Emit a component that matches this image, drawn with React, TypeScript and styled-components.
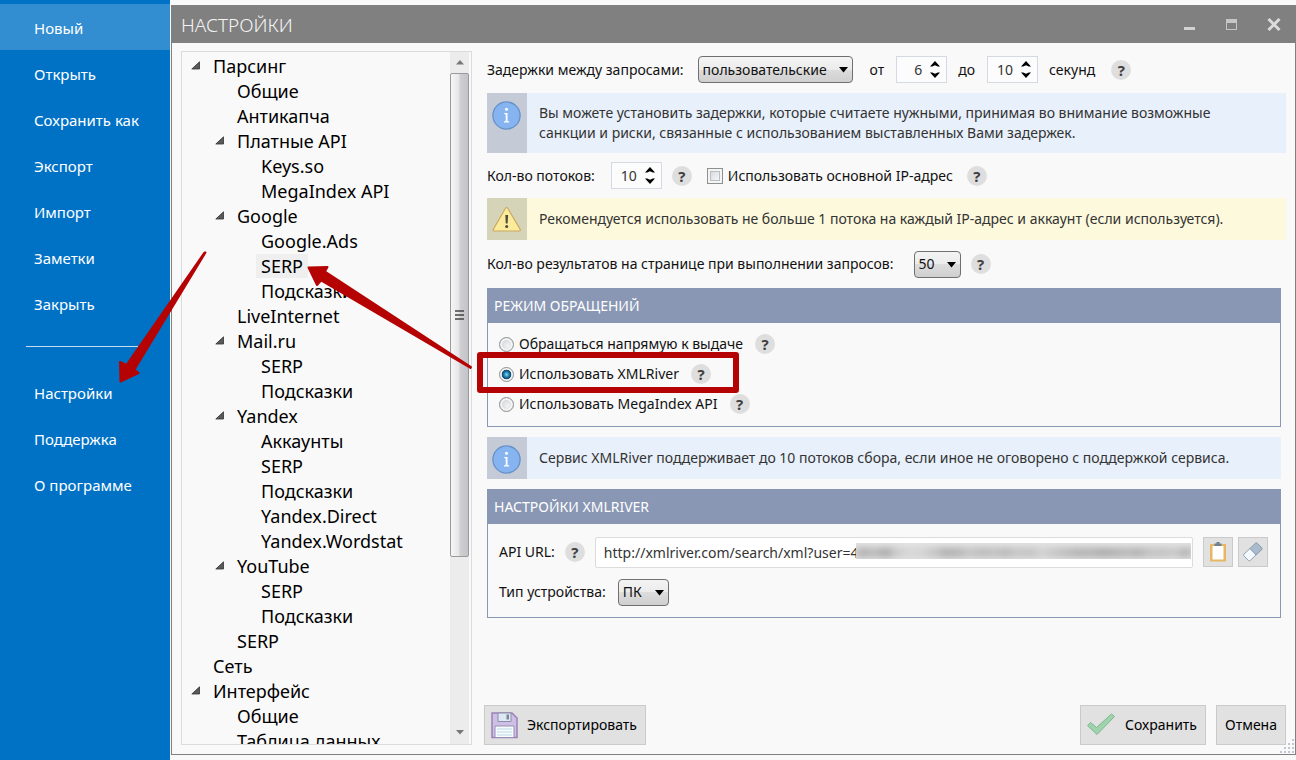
import React, { useState } from "react";
import styled, { createGlobalStyle, css } from "styled-components";

const GlobalStyle = createGlobalStyle`
  *, *::before, *::after { box-sizing: border-box; }
  body {
    margin: 0;
    background: #f9f9f9;
    color: #111;
    font-family: "Noto Sans", "Open Sans", sans-serif;
    font-size: 14px;
    line-height: 20px;
  }
  button, input, select { font: inherit; color: inherit; margin: 0; }
`;

const Page = styled.div`
  position: relative;
  display: flex;
  height: 100vh;
  overflow: hidden;
`;

/* ---------- Left menu ---------- */

const Sidebar = styled.nav`
  flex: 0 0 170px;
  padding-top: 4px;
  background: #0072c6;
`;

const MenuItem = styled.button<{ $active?: boolean }>`
  display: block;
  width: 100%;
  height: 46px;
  padding: 1px 0 0 34px;
  border: 0;
  background: ${(p) => (p.$active ? "#338ed1" : "transparent")};
  color: #fff;
  font-size: 15px;
  text-align: left;
  cursor: pointer;
`;

const MenuRule = styled.hr`
  width: 112px;
  height: 1px;
  margin: 20px 0 22px 26px;
  border: 0;
  background: #c3def2;
`;

/* ---------- Window ---------- */

const Window = styled.main`
  display: flex;
  flex: 1;
  flex-direction: column;
  min-width: 0;
  margin: 5px 0 5px 1px;
  border: 1px solid #808080;
`;

const TitleBar = styled.header`
  display: flex;
  flex: 0 0 37px;
  align-items: center;
  justify-content: space-between;
  padding: 0 11px 0 9px;
  background: #808080;
`;

const Title = styled.h1`
  margin: 0;
  color: #f4f4f4;
  font-size: 19px;
  font-weight: 300;
  line-height: 24px;
`;

const WindowButtons = styled.div`
  display: flex;
  gap: 22px;
`;

const WindowButton = styled.button`
  display: grid;
  width: 20px;
  height: 20px;
  padding: 0;
  place-items: center;
  border: 0;
  background: none;
`;

const WindowBody = styled.div`
  display: flex;
  flex: 1;
  gap: 12px;
  min-height: 0;
  padding: 8px 9px 9px;
`;

/* ---------- Tree ---------- */

const TreePanel = styled.aside`
  display: flex;
  flex: 0 0 291px;
  padding-right: 2px;
  border: 1px solid #dcdcdc;
`;

const Tree = styled.ul`
  flex: 1;
  margin: 0;
  padding: 1px 0 0;
  overflow: hidden;
  list-style: none;
`;

const TreeRow = styled.li<{ $level: number }>`
  display: flex;
  align-items: center;
  height: 25px;
  padding-left: ${(p) => 9 + p.$level * 24}px;
  font-size: 18px;
  line-height: 24px;
`;

const Twisty = styled.svg`
  flex: none;
  width: 9px;
  height: 9px;
  margin-right: 8px;
`;

const TreeLabel = styled.span<{ $selected: boolean }>`
  padding: 0 5px;
  background: ${(p) => (p.$selected ? "#efefef" : "transparent")};
  color: #000;
  white-space: nowrap;
`;

const ScrollTrack = styled.div`
  display: flex;
  flex: 0 0 19px;
  flex-direction: column;
  align-items: center;
  background: #ececec;
`;

const ScrollArrow = styled.svg`
  flex: none;
  width: 18px;
  height: 21px;
`;

const ScrollThumb = styled.div`
  display: grid;
  flex: 0 1 484px;
  width: 19px;
  place-items: center;
  border: 1px solid #9a9a9a;
  border-radius: 2px;
  background: linear-gradient(90deg, #f6f6f6, #e6e6e8 45%, #cfcfd2 55%, #c3c4c9);
`;

const ScrollSpace = styled.div`
  flex: 1;
`;

/* ---------- Settings form ---------- */

const Content = styled.section`
  display: flex;
  flex: 1;
  flex-direction: column;
  min-width: 0;
  padding-left: 3px;
`;

const FormRow = styled.div<{ $height: number }>`
  display: flex;
  align-items: center;
  height: ${(p) => p.$height}px;
  white-space: nowrap;
`;

const FormGap = styled.div<{ $size: number }>`
  flex: 0 0 ${(p) => p.$size}px;
  height: ${(p) => p.$size}px;
`;

const Caption = styled.label<{ $gap: number; $before?: number }>`
  margin: 0 ${(p) => p.$gap}px 0 ${(p) => p.$before ?? 0}px;
`;

const SelectBox = styled.span<{ $width: number }>`
  position: relative;
  flex: none;
  width: ${(p) => p.$width}px;
  height: 27px;

  select {
    width: 100%;
    height: 100%;
    padding: 0 0 0 4px;
    appearance: none;
    border: 1px solid #707070;
    border-radius: 4px;
    background: linear-gradient(#f4f4f4, #ebebeb 50%, #dddddd 50%, #cfcfcf);
  }

  svg {
    position: absolute;
    top: 11px;
    right: 5px;
    pointer-events: none;
  }
`;

const SpinnerBox = styled.span`
  display: flex;
  flex: none;
  width: 51px;
  height: 27px;
  border: 1px solid #d5d9e4;
  background: #fcfcfc;

  input {
    width: 25px;
    padding: 0;
    border: 0;
    background: none;
    color: #333;
    text-align: right;
  }
`;

const SpinnerButtons = styled.span`
  display: flex;
  flex: 1;
  flex-direction: column;
  padding: 2px 0 2px 2px;

  button {
    display: grid;
    flex: 1;
    padding: 0;
    place-items: center;
    border: 0;
    background: none;
  }
`;

const HelpButton = styled.button<{ $before: number; $after?: number }>`
  flex: none;
  width: 20px;
  height: 20px;
  margin: 0 ${(p) => p.$after ?? 0}px 0 ${(p) => p.$before}px;
  padding: 0;
  border: 0;
  border-radius: 50%;
  background: #dedede;
  color: #404040;
  font-weight: 700;
  font-size: 15px;
  line-height: 20px;
`;

const CheckLabel = styled.label`
  display: flex;
  align-items: center;
  gap: 5px;
`;

const CheckBox = styled.input`
  width: 16px;
  height: 16px;
  appearance: none;
  border: 1px solid #8e8f8f;
  background: linear-gradient(135deg, #cdd1d7, #f4f4f5 75%);
  box-shadow: inset 0 0 0 2px #f4f4f4, inset 0 0 0 3px #b9bdc4;
`;

const boxTones = {
  info: css`
    --strip: #c4cbd6;
    background: #e8f0fb;
  `,
  warning: css`
    --strip: #d6d4b8;
    background: #fdf9dc;
  `,
};

const Notice = styled.div<{ $tone: "info" | "warning"; $inset?: boolean }>`
  ${(p) => boxTones[p.$tone]}
  display: flex;
  flex: none;
  margin-right: ${(p) => (p.$inset ? 5 : 0)}px;
  color: #333;

  p {
    align-self: center;
    margin: 0;
    padding: 10px 12px;
  }
`;

const NoticeStrip = styled.div`
  flex: 0 0 40px;
  padding: 7px 5px 5px;
  background: var(--strip);

  svg {
    display: block;
  }
`;

const Group = styled.fieldset`
  flex: none;
  min-width: 0;
  margin: 0 5px 0 0;
  padding: 0;
  border: 1px solid #8997b4;
`;

const GroupTitle = styled.h2`
  margin: 0;
  padding: 7px 6px;
  background: #8997b4;
  color: #fff;
  font-size: 14px;
  font-weight: 400;
  line-height: 20px;
`;

const RadioList = styled.div`
  padding: 6px 11px 7px;
`;

const RadioLabel = styled.label`
  display: flex;
  align-items: center;
  gap: 5px;
`;

const Radio = styled.input`
  width: 15px;
  height: 15px;
  appearance: none;
  border: 1px solid #8e8f8f;
  border-radius: 50%;
  background: radial-gradient(circle at 60% 60%, #f4f4f4, #cfd3d9 70%);
  box-shadow: inset 0 0 0 2px #f4f4f4;

  &:checked {
    background: radial-gradient(circle, #8fdcf5 0, #2a93c4 22%, #0f4468 48%, #f4f4f4 56%);
    box-shadow: none;
  }
`;

const ApiRows = styled.div`
  padding: 11px 12px 8px 11px;
`;

const UrlField = styled.span`
  position: relative;
  flex: 1;
  height: 31px;
  margin: 0 10px;

  input {
    width: 100%;
    height: 100%;
    padding: 0 8px;
    border: 1px solid #dcdcdc;
    border-radius: 2px;
    background: #fff;
    color: #333;
  }

  svg {
    position: absolute;
    top: 6px;
    right: 2px;
  }
`;

const ToolButton = styled.button`
  display: grid;
  flex: none;
  width: 30px;
  height: 30px;
  padding: 0;
  place-items: center;
  border: 1px solid #cacaca;
  background: #e1e1e1;

  & + & {
    margin-left: 5px;
  }
`;

/* ---------- Footer ---------- */

const Footer = styled.footer`
  display: flex;
  gap: 10px;
  margin: auto 0 0 -3px;
`;

const FooterButton = styled.button<{ $push?: boolean }>`
  display: flex;
  align-items: center;
  height: 40px;
  padding: 0 8px 0 5px;
  gap: 9px;
  margin-right: ${(p) => (p.$push ? "auto" : "0")};
  border: 1px solid #cacaca;
  background: #e1e1e1;
  color: #000;
`;

const PlainFooterButton = styled(FooterButton)`
  padding: 0 8px;
`;

const Grip = styled.svg`
  position: absolute;
  right: 2px;
  bottom: 7px;
`;

const Marks = styled.svg`
  position: absolute;
  top: 0;
  left: 0;
  pointer-events: none;
`;

/* ---------- Small pieces ---------- */

function Help({ before, after }: { before: number; after?: number }) {
  return (
    <HelpButton type="button" aria-label="Справка" $before={before} $after={after}>
      ?
    </HelpButton>
  );
}

function Select({ id, width, value }: { id: string; width: number; value: string }) {
  return (
    <SelectBox $width={width}>
      <select id={id} defaultValue={value}>
        <option>{value}</option>
      </select>
      <svg width="9" height="6" viewBox="0 0 9 6">
        <path d="M0 0h9L4.5 5.5z" fill="#000" />
      </svg>
    </SelectBox>
  );
}

function Spinner({ id, initial }: { id: string; initial: number }) {
  const [value, setValue] = useState(initial);
  return (
    <SpinnerBox>
      <input id={id} inputMode="numeric" value={value} onChange={(e) => setValue(Number(e.target.value) || 0)} />
      <SpinnerButtons>
        <button type="button" aria-label="Больше" onClick={() => setValue(value + 1)}>
          <svg width="10" height="6" viewBox="0 0 10 6">
            <path d="M0 5.500L5 0l5 5.500H7.800L5 4.300 2.200 5.500z" fill="#000" />
          </svg>
        </button>
        <button type="button" aria-label="Меньше" onClick={() => setValue(Math.max(0, value - 1))}>
          <svg width="10" height="6" viewBox="0 0 10 6">
            <path d="M0 .5L5 6l5-5.500H7.800L5 1.700 2.200.5z" fill="#000" />
          </svg>
        </button>
      </SpinnerButtons>
    </SpinnerBox>
  );
}

function InfoIcon() {
  return (
    <svg width="30" height="30" viewBox="0 0 30 30">
      <circle cx="14.500" cy="15.500" r="13.600" fill="#86b4f0" stroke="#6690c8" strokeWidth="1.300" />
      <circle cx="14.500" cy="9.300" r="1.500" fill="#fff" />
      <path d="M12.300 13h3.200v8.200h1.700v1.300h-5.200v-1.300h1.700v-6.900h-1.400z" fill="#fff" />
    </svg>
  );
}

function WarningIcon() {
  return (
    <svg width="30" height="30" viewBox="0 0 30 30">
      <path
        d="M14.500 2.500Q15.300 2.500 16 3.700L28 24Q29 26 27 26H2.500Q.5 26 1.500 24L13.200 3.700Q13.800 2.500 14.500 2.500z"
        fill="#fdeb9c"
        stroke="#c9a860"
        strokeWidth="1.200"
      />
      <path d="M13.300 10h2.800l-.5 8.500h-1.800z" fill="#4c4a3c" />
      <circle cx="14.700" cy="21.500" r="1.500" fill="#4c4a3c" />
    </svg>
  );
}

/* ---------- Data ---------- */

type Node = { level: number; text: string; open?: boolean; selected?: boolean };

const tree: Node[] = [
  { level: 0, text: "Парсинг", open: true },
  { level: 1, text: "Общие" },
  { level: 1, text: "Антикапча" },
  { level: 1, text: "Платные API", open: true },
  { level: 2, text: "Keys.so" },
  { level: 2, text: "MegaIndex API" },
  { level: 1, text: "Google", open: true },
  { level: 2, text: "Google.Ads" },
  { level: 2, text: "SERP", selected: true },
  { level: 2, text: "Подсказки" },
  { level: 1, text: "LiveInternet" },
  { level: 1, text: "Mail.ru", open: true },
  { level: 2, text: "SERP" },
  { level: 2, text: "Подсказки" },
  { level: 1, text: "Yandex", open: true },
  { level: 2, text: "Аккаунты" },
  { level: 2, text: "SERP" },
  { level: 2, text: "Подсказки" },
  { level: 2, text: "Yandex.Direct" },
  { level: 2, text: "Yandex.Wordstat" },
  { level: 1, text: "YouTube", open: true },
  { level: 2, text: "SERP" },
  { level: 2, text: "Подсказки" },
  { level: 1, text: "SERP" },
  { level: 0, text: "Сеть" },
  { level: 0, text: "Интерфейс", open: true },
  { level: 1, text: "Общие" },
  { level: 1, text: "Таблица данных" },
];

const menuTop = ["Новый", "Открыть", "Сохранить как", "Экспорт", "Импорт", "Заметки", "Закрыть"];
const menuBottom = ["Настройки", "Поддержка", "О программе"];

const modes = ["Обращаться напрямую к выдаче", "Использовать XMLRiver", "Использовать MegaIndex API"];

/* Shades of the masked account key, one block for every few characters. */
const maskShades = [
  "#b4b4b4", "#bdbdbd", "#adadad", "#cecece", "#d8d8d8", "#d4d4d4", "#c6c6c6", "#b4b4b4", "#b8b8b8", "#c6c6c6",
  "#bebebe", "#c2c2c2", "#bcbcbc", "#c8c8c8", "#c4c4c4", "#d2d2d2", "#c8c8c8", "#c0c0c0", "#b6b6b6", "#b8b8b8",
  "#b0b0b0", "#b4b4b4", "#bcbcbc", "#b6b6b6", "#c4c4c4", "#c4c4c4", "#cacaca", "#b6b6b6",
];

export default function App() {
  const [mode, setMode] = useState(modes[1]);

  return (
    <Page>
      <GlobalStyle />
      <Sidebar>
        {menuTop.map((text, i) => (
          <MenuItem key={text} type="button" $active={i === 0}>
            {text}
          </MenuItem>
        ))}
        <MenuRule />
        {menuBottom.map((text) => (
          <MenuItem key={text} type="button">
            {text}
          </MenuItem>
        ))}
      </Sidebar>

      <Window>
        <TitleBar>
          <Title>НАСТРОЙКИ</Title>
          <WindowButtons>
            <WindowButton type="button" aria-label="Свернуть">
              <svg width="12" height="12" viewBox="0 0 12 12">
                <path d="M0 8h11v3H0z" fill="#d2d2d2" />
              </svg>
            </WindowButton>
            <WindowButton type="button" aria-label="Развернуть">
              <svg width="12" height="12" viewBox="0 0 12 12">
                <path d="M0 0h11v11H0zM1 4v6h9V4z" fill="#c6c6c6" fillRule="evenodd" />
              </svg>
            </WindowButton>
            <WindowButton type="button" aria-label="Закрыть">
              <svg width="14" height="14" viewBox="0 0 14 14">
                <path d="M1.500 1l11 11M12.500 1l-11 11" stroke="#dcdcdc" strokeWidth="3" />
              </svg>
            </WindowButton>
          </WindowButtons>
        </TitleBar>

        <WindowBody>
          <TreePanel>
            <Tree>
              {tree.map((node, i) => (
                <TreeRow key={i} $level={node.level}>
                  <Twisty viewBox="0 0 9 9">
                    {node.open && <path d="M8.500 .8v7.200H.8z" fill="#5a5a5a" stroke="#333" strokeWidth=".8" />}
                  </Twisty>
                  <TreeLabel $selected={!!node.selected}>{node.text}</TreeLabel>
                </TreeRow>
              ))}
            </Tree>
            <ScrollTrack>
              <ScrollArrow viewBox="0 0 18 21">
                <path d="M5 12.500L9 8l4 4.500z" fill="#777" />
              </ScrollArrow>
              <ScrollThumb>
                <svg width="10" height="10" viewBox="0 0 10 10">
                  <path d="M0 1h9M0 5h9M0 9h9" stroke="#444" strokeWidth="1.500" />
                </svg>
              </ScrollThumb>
              <ScrollSpace />
              <ScrollArrow viewBox="0 0 18 21">
                <path d="M5 7h8l-4 4.500z" fill="#777" />
              </ScrollArrow>
            </ScrollTrack>
          </TreePanel>

          <Content>
            <FormRow $height={37}>
              <Caption htmlFor="delay" $gap={14}>Задержки между запросами:</Caption>
              <Select id="delay" width={155} value="пользовательские" />
              <Caption htmlFor="from" $gap={12} $before={17}>от</Caption>
              <Spinner id="from" initial={6} />
              <Caption htmlFor="to" $gap={12} $before={11}>до</Caption>
              <Spinner id="to" initial={10} />
              <Caption as="span" $gap={0} $before={11}>секунд</Caption>
              <Help before={16} />
            </FormRow>

            <FormGap $size={5} />
            <Notice $tone="info">
              <NoticeStrip>
                <InfoIcon />
              </NoticeStrip>
              <p>
                Вы можете установить задержки, которые считаете нужными, принимая во внимание возможные
                <br />
                санкции и риски, связанные с использованием выставленных Вами задержек.
              </p>
            </Notice>

            <FormRow $height={45}>
              <Caption htmlFor="threads" $gap={16}>Кол-во потоков:</Caption>
              <Spinner id="threads" initial={10} />
              <Help before={10} after={15} />
              <CheckLabel>
                <CheckBox type="checkbox" />
                Использовать основной IP-адрес
              </CheckLabel>
              <Help before={14} />
            </FormRow>

            <Notice $tone="warning">
              <NoticeStrip>
                <WarningIcon />
              </NoticeStrip>
              <p>Рекомендуется использовать не больше 1 потока на каждый IP-адрес и аккаунт (если используется).</p>
            </Notice>

            <FormRow $height={48}>
              <Caption htmlFor="results" $gap={20}>
                Кол-во результатов на странице при выполнении запросов:
              </Caption>
              <Select id="results" width={47} value="50" />
              <Help before={10} />
            </FormRow>

            <Group>
              <GroupTitle>РЕЖИМ ОБРАЩЕНИЙ</GroupTitle>
              <RadioList>
                {modes.map((text) => (
                  <FormRow key={text} $height={30}>
                    <RadioLabel>
                      <Radio type="radio" name="mode" checked={mode === text} onChange={() => setMode(text)} />
                      {text}
                    </RadioLabel>
                    <Help before={12} />
                  </FormRow>
                ))}
              </RadioList>
            </Group>

            <FormGap $size={10} />
            <Notice $tone="info" $inset>
              <NoticeStrip>
                <InfoIcon />
              </NoticeStrip>
              <p>Сервис XMLRiver поддерживает до 10 потоков сбора, если иное не оговорено с поддержкой сервиса.</p>
            </Notice>
            <FormGap $size={10} />

            <Group>
              <GroupTitle>НАСТРОЙКИ XMLRIVER</GroupTitle>
              <ApiRows>
                <FormRow $height={34}>
                  <Caption htmlFor="api" $gap={0}>API URL:</Caption>
                  <Help before={10} />
                  <UrlField>
                    <input id="api" type="text" defaultValue="http://xmlriver.com/search/xml?user=4" />
                    <svg width="335" height="16" viewBox="0 0 335 16">
                      <defs>
                        <filter id="mask-blur" x="0" y="0" width="1" height="1">
                          <feGaussianBlur stdDeviation="4 3" />
                        </filter>
                      </defs>
                      <rect width="335" height="16" fill="#e2e2e2" />
                      <g filter="url(#mask-blur)">
                        <rect width="335" height="16" fill="#e4e4e4" />
                        {maskShades.map((shade, i) => (
                          <rect key={i} x={i * 12} y="4" width="12" height="11" fill={shade} />
                        ))}
                      </g>
                    </svg>
                  </UrlField>
                  <ToolButton type="button" aria-label="Вставить">
                    <svg width="18" height="20" viewBox="0 0 18 20">
                      <path d="M1 2h16v17.500H1z" fill="#e8b765" />
                      <path d="M3.500 4h11v13.500h-11z" fill="#fff" />
                      <path d="M5.500 1.500h2V0h3v1.500h2V4h-7z" fill="#6f7f92" />
                    </svg>
                  </ToolButton>
                  <ToolButton type="button" aria-label="Очистить">
                    <svg width="20" height="20" viewBox="0 0 20 20">
                      <path d="M7 6.500l5.500-5.300q.8-.7 1.600 0l4.700 4.700q.8.800 0 1.600L13 13z" fill="#a9bccd" stroke="#8496a8" />
                      <path d="M7 6.500L.8 12.200q-.6.800 0 1.500l4.700 4.900q.8.700 1.600 0L13 13z" fill="#f2f8fc" stroke="#8ea2b5" />
                    </svg>
                  </ToolButton>
                </FormRow>
                <FormGap $size={6} />
                <FormRow $height={34}>
                  <Caption htmlFor="device" $gap={12}>Тип устройства:</Caption>
                  <Select id="device" width={51} value="ПК" />
                </FormRow>
              </ApiRows>
            </Group>

            <Footer>
              <FooterButton type="button" $push>
                <svg width="28" height="28" viewBox="0 0 28 28">
                  <path d="M2 2h20l5 5v19.500H2z" fill="#cdbfe6" stroke="#9a83b5" strokeWidth="1.500" />
                  <path d="M8 2h13v8.500H8z" fill="#dde9f2" stroke="#8f8ba8" />
                  <path d="M16.500 3.500h2.500v5h-2.500z" fill="#7b8796" />
                  <path d="M5 15h19v11.500H5z" fill="#f6fbfd" stroke="#9a8fb5" />
                  <path d="M7 18h15M7 21h15M7 24h15" stroke="#bcd9e6" />
                </svg>
                Экспортировать
              </FooterButton>
              <FooterButton type="button">
                <svg width="30" height="26" viewBox="0 0 30 26">
                  <path d="M1.500 13.500l3-3 6 5L25.500 2l3 2.500-17.500 18z" fill="#9fd3ae" stroke="#7db890" />
                </svg>
                Сохранить
              </FooterButton>
              <PlainFooterButton type="button">Отмена</PlainFooterButton>
            </Footer>
          </Content>
        </WindowBody>
      </Window>

      <Grip width="14" height="14" viewBox="0 0 14 14">
        <path
          d="M12 0h2v2h-2zM8 4h2v2H8zM12 4h2v2h-2zM4 8h2v2H4zM8 8h2v2H8zM12 8h2v2h-2zM0 12h2v2H0zM4 12h2v2H4zM8 12h2v2H8zM12 12h2v2h-2z"
          fill="#c3c5d6"
        />
      </Grip>

      <Marks width="760" height="420" viewBox="0 0 760 420" fill="#b50303" stroke="#b50303" strokeLinejoin="round">
        <path strokeWidth="2" d="M204.500 252.500h1L134.500 369.500l4 3.500-18 8.500-.5-19.500 6.500 3z" />
        <path strokeWidth="2" d="M308.500 267.500l19-.5-2.500 4.500L471 367l-.5 1L321 280.500l-4 4.500z" />
        <rect x="480" y="355" width="256" height="35" fill="none" strokeWidth="6" />
      </Marks>
    </Page>
  );
}
